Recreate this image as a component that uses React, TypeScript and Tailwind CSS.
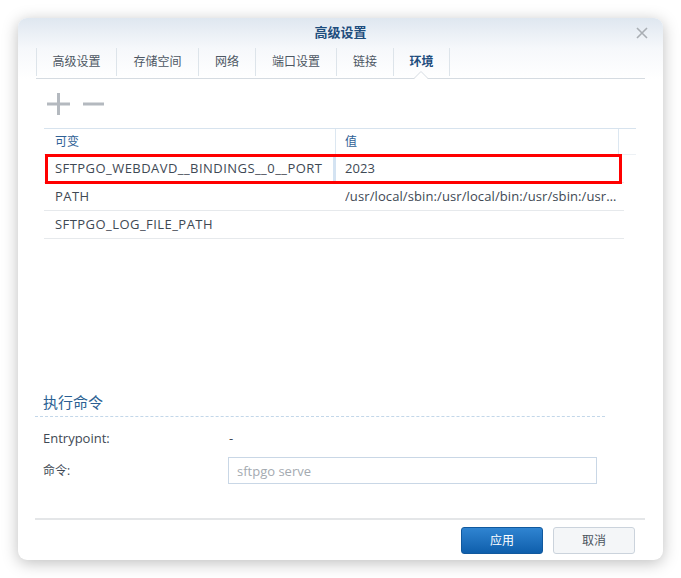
import React from "react";

const tabs = [
  { label: "高级设置", w: "w-[81px] border-l" },
  { label: "存储空间", w: "w-[82px]" },
  { label: "网络", w: "w-[57px]" },
  { label: "端口设置", w: "w-[81px]" },
  { label: "链接", w: "w-[57px]" },
  { label: "环境", w: "w-[56px]", active: true },
];

const rows = [
  { name: "SFTPGO_WEBDAVD__BINDINGS__0__PORT", value: "2023", editing: true },
  { name: "PATH", value: "/usr/local/sbin:/usr/local/bin:/usr/sbin:/usr/bin:/sbin:/bin" },
  { name: "SFTPGO_LOG_FILE_PATH", value: "" },
];

// Container env settings dialog (DSM style) — 环境 tab
export default function App() {
  return (
    <div className="h-[578px] w-[681px] bg-white p-[18px] font-['Open_Sans','Noto_Sans_CJK_SC',sans-serif] text-[#3e4954]">
      <div className="flex h-full flex-col overflow-hidden rounded-[9px] bg-white shadow-[0_3px_16px_rgba(0,0,0,0.26)]">
        {/* header: title + tabs */}
        <div className="bg-gradient-to-b from-[#dfe7f0] via-[#f6f8fb] to-white px-[18px]">
          <div className="relative flex h-[30px] items-center justify-center">
            <span className="text-[13px] font-bold text-[#1e4d7d]">高级设置</span>
            <svg className="absolute right-[-3px] top-[9px] h-[12px] w-[12px]" viewBox="0 0 12 12">
              <path d="M1 1 11 11M11 1 1 11" stroke="#a9aeb4" strokeWidth="1.6" fill="none" />
            </svg>
          </div>
          <div className="relative flex h-[31px] border-b border-[#d5dbe1] pb-[2px]">
            {tabs.map((t) => (
              <div
                key={t.label}
                className={`${t.w} flex items-center justify-center border-r border-[#dde4ea] text-[12px] ${t.active ? "font-bold text-[#1e4d7d]" : "text-[#4d5763]"}`}
              >
                {t.label}
              </div>
            ))}
            <svg className="absolute bottom-[-1px] left-[378px] h-[8px] w-[14px]" viewBox="0 0 14 8">
              <polygon points="0,8 7,1 14,8" fill="#fff" />
              <polyline points="0,7.5 7,0.5 14,7.5" fill="none" stroke="#d5dbe1" strokeWidth="1" />
            </svg>
          </div>
        </div>

        {/* body */}
        <div className="flex flex-1 flex-col">
          <div className="flex gap-[13px] pl-[29px] pt-[14px]">
            <svg className="h-[22px] w-[23px]" viewBox="0 0 23 22">
              <path d="M0 11h23M11.5 0v22" stroke="#b4b9bf" strokeWidth="3" />
            </svg>
            <svg className="h-[22px] w-[21px]" viewBox="0 0 21 22">
              <path d="M0 11h21" stroke="#b4b9bf" strokeWidth="3" />
            </svg>
          </div>

          <div className="ml-[26px] mt-[13px] w-[592px]">
            <div className="flex h-[27px] border-t border-b border-[#d7e3ee] border-b-[#edf1f5] text-[12px] text-[#2f6196]">
              <div className="flex w-[292px] items-center border-r border-[#dce7f1] pl-[11px]">可变</div>
              <div className="flex w-[283px] items-center border-r border-[#dce7f1] pl-[9px]">值</div>
              <div className="flex-1" />
            </div>
            {rows.map((r) => (
              <div key={r.name} className="relative flex h-[28px] w-[580px] border-b border-[#e6e9ec] pt-[1px] text-[13px]">
                <div className={`flex w-[292px] items-center pl-[11px] tracking-[0.45px] ${r.editing ? "border-r-[3px] border-[#d4e3f2]" : ""}`}>
                  {r.name}
                </div>
                <div className="flex min-w-0 flex-1 items-center pl-[9px] pr-[4px] tracking-[0.1px]">
                  <span className="truncate">{r.value}</span>
                </div>
                {r.editing && (
                  <div className="pointer-events-none absolute bottom-[-2px] left-[1px] right-[2px] top-[-1px] border-[3px] border-[#ff0000]" />
                )}
              </div>
            ))}
          </div>

          {/* 执行命令 */}
          <div className="ml-[17px] mt-[153px] flex h-[25px] w-[570px] items-start border-b border-dashed border-[#c3d7e9] pl-[8px]">
            <span className="text-[15px] leading-[20px] text-[#2b5f93]">执行命令</span>
          </div>
          <div className="ml-[25px] mt-[11px] flex h-[20px] items-center pt-[1px] text-[13px]">
            <span className="w-[185px]">Entrypoint:</span>
            <span className="pl-[1px]">-</span>
          </div>
          <div className="ml-[25px] mt-[9px] flex h-[27px] items-center">
            <span className="w-[185px] text-[12px]">命令:</span>
            <input
              readOnly
              placeholder="sftpgo serve"
              className="h-[27px] w-[369px] border border-[#c9d7e6] bg-white pl-[8px] text-[13px] outline-none placeholder:text-[#a4aab1]"
            />
          </div>

          {/* footer */}
          <div className="ml-[17px] mr-[18px] mt-auto flex justify-end gap-[10px] border-t-2 border-[#e4e6e8] pb-[6px] pr-[10px] pt-[7px]">
            <button className="h-[27px] w-[82px] rounded-[3px] border border-[#11599e] bg-gradient-to-b from-[#2f84d1] to-[#0e5fac] text-[12px] text-white">
              应用
            </button>
            <button className="h-[27px] w-[82px] rounded-[3px] border border-[#cbd3dc] bg-[#f4f6f8] text-[12px] text-[#4b545e]">
              取消
            </button>
          </div>
        </div>
      </div>
    </div>
  );
}
